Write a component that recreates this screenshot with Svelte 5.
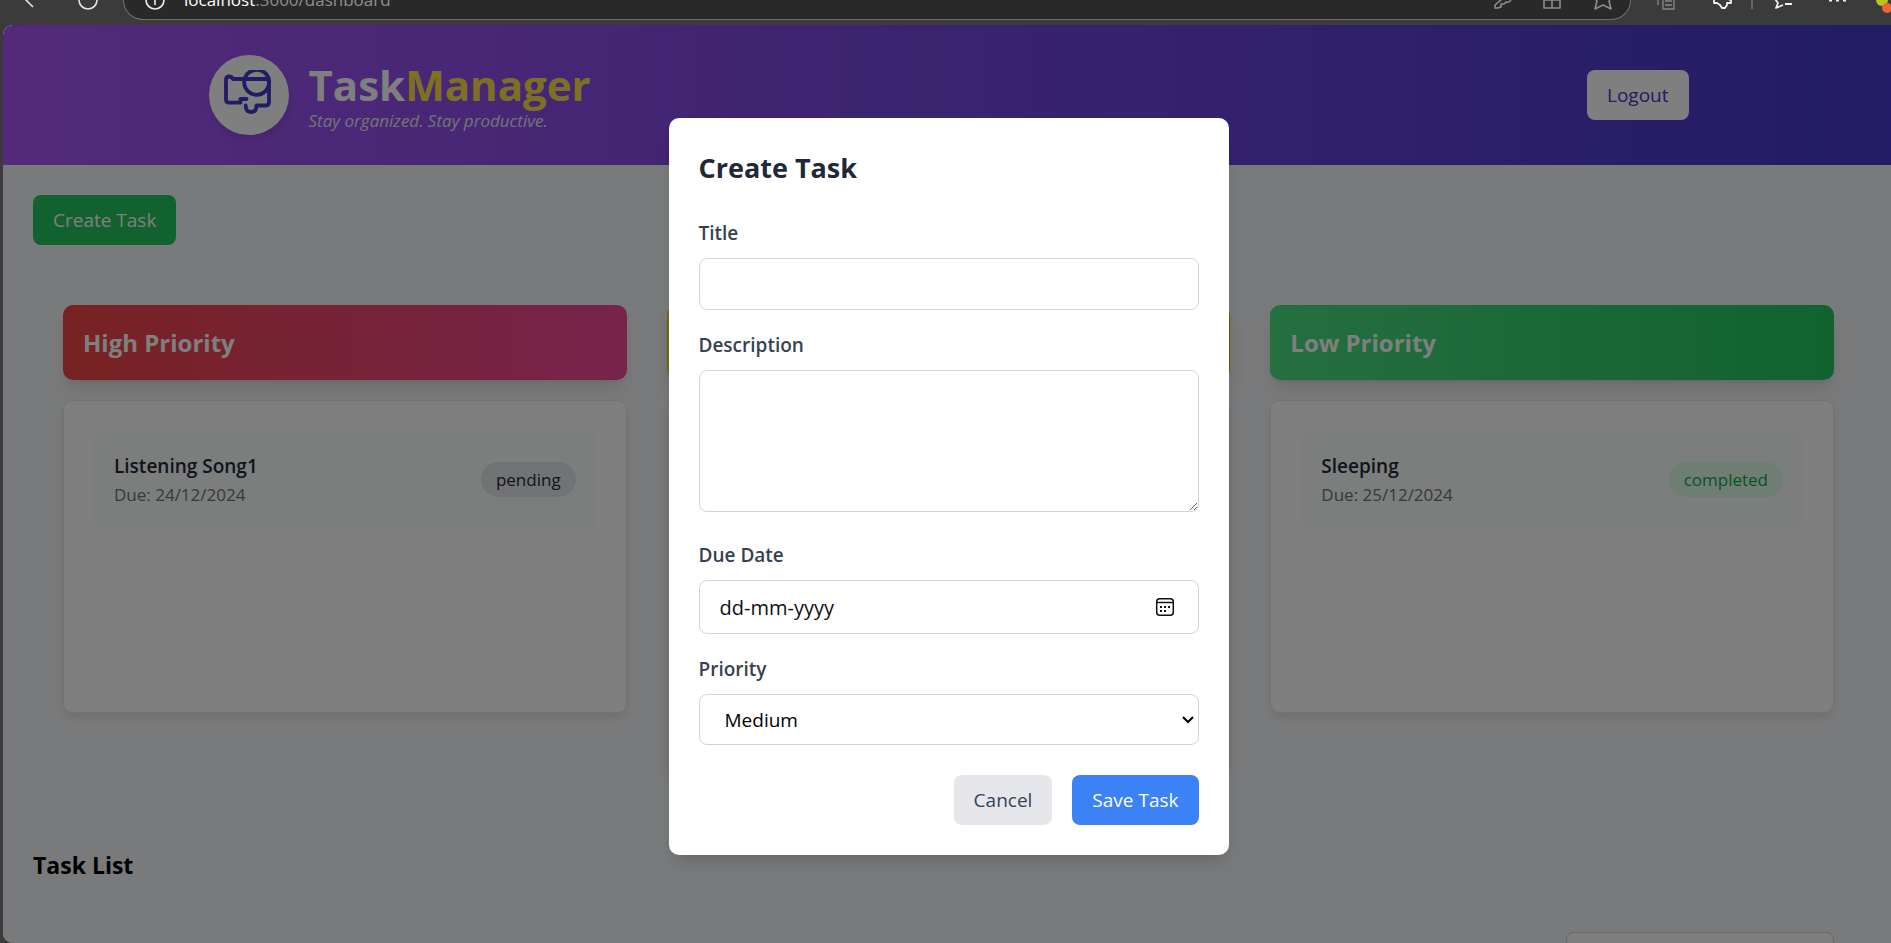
<script>
  let title = $state('');
  let description = $state('');
  let dueDate = $state('');
  let priority = $state('Medium');
  let search = $state('');

  const columns = [
    {
      name: 'High Priority',
      tone: 'high',
      tasks: [{ title: 'Listening Song1', due: '24/12/2024', status: 'pending' }]
    },
    { name: 'Medium Priority', tone: 'medium', tasks: [] },
    {
      name: 'Low Priority',
      tone: 'low',
      tasks: [{ title: 'Sleeping', due: '25/12/2024', status: 'completed' }]
    }
  ];
</script>

<div class="window">
  <div class="toolbar">
    <div class="nav">
      <svg width="40" height="24" viewBox="0 0 40 24"><path d="M22 -4 L33 7" fill="none" stroke="#e8e8e8" stroke-width="1.6" /></svg>
      <svg width="40" height="24" viewBox="0 0 40 24"><circle cx="28" cy="0" r="9" fill="none" stroke="#e8e8e8" stroke-width="1.6" /></svg>
    </div>
    <div class="address">
      <svg width="24" height="19" viewBox="0 0 24 19"><circle cx="11" cy="0" r="9" fill="none" stroke="#f0f0f0" stroke-width="1.6" /><path d="M11 -2V5" stroke="#f0f0f0" stroke-width="1.6" /></svg>
      <span class="url"><b>localhost</b>:3000/dashboard</span>
      <svg width="138" height="19" viewBox="0 0 138 19" fill="none" stroke="#8d8d8d" stroke-width="1.6" stroke-linejoin="round">
        <path d="M10 -1L3 5V8H6L9 7V4H12L14 2C17 3 19 1 19 -2" />
        <path d="M52 -8H68V8H52ZM60 -8V8M52 0H68" />
        <path d="M102 -3L105 1L103 9L111 5L119 9L117 1L120 -3" />
      </svg>
    </div>
    <svg class="tools" width="240" height="24" viewBox="0 0 240 24" fill="none" stroke="#f0f0f0" stroke-width="1.8" stroke-linejoin="round">
      <path d="M7 -2V5M12 -3H23V9H12ZM14 1H21M14 5H21" stroke="#747474" />
      <path d="M63 -2V3H66L69 5L71 8H74L76 5V3H80V0C77 0 77 -3 79 -3" />
      <path d="M101 0V9" stroke="#6a6a6a" />
      <path d="M124 -1L127 3L125 8L132 5M134 -1H141M134 4H141" />
      <path d="M178 0H181M185 0H188M192 0H195" stroke-width="3" />
      <circle cx="231" cy="0" r="6" fill="#b8c51d" stroke="none" /><circle cx="236" cy="8" r="5" fill="#f06432" stroke="none" />
    </svg>
  </div>

  <div class="page">
    <header>
      <div class="header-inner">
        <div class="brand">
          <div class="logo">
            <svg width="50" height="50" viewBox="0 0 50 50" fill="none" stroke="#4338ca" stroke-width="3.8" stroke-linecap="round" stroke-linejoin="round">
              <path d="M22.5 29H16.5V32.7H5Q2 32.7 2 29.5V10Q2 6.5 5.5 6.5Q7.5 6.500 9 9H42Q45 9 45 12V32Q45 35.500 42 35.500H32.500Q32.500 42 27 42Q21.700 42 21.700 35.500" />
              <circle cx="32.7" cy="12.3" r="12.5" />
            </svg>
          </div>
          <div class="brand-text">
            <h1>Task<span>Manager</span></h1>
            <p>Stay organized. Stay productive.</p>
          </div>
        </div>
        <button class="btn logout">Logout</button>
      </div>
    </header>

    <main>
      <button class="btn create">Create Task</button>
      <div class="board">
        {#each columns as column}
          <section>
            <h2 class={column.tone}>{column.name}</h2>
            <div class="panel" class:tall={column.tone === 'medium'}>
              {#each column.tasks as task}
                <article>
                  <div>
                    <h3>{task.title}</h3>
                    <p>Due: {task.due}</p>
                  </div>
                  <span class="badge {task.status}">{task.status}</span>
                </article>
              {/each}
            </div>
          </section>
        {/each}
      </div>
      <h2 class="list-title">Task List</h2>
      <div class="filters">
        <input type="text" aria-label="Search tasks" bind:value={search} />
      </div>
    </main>

    <div class="overlay">
      <form class="modal" onsubmit={(event) => event.preventDefault()}>
        <h2>Create Task</h2>
        <div class="field">
          <label for="title">Title</label>
          <input id="title" type="text" bind:value={title} />
        </div>
        <div class="field">
          <label for="description">Description</label>
          <textarea id="description" bind:value={description}></textarea>
        </div>
        <div class="field">
          <label for="due">Due Date</label>
          <div class="date">
            <input id="due" type="text" placeholder="dd-mm-yyyy" bind:value={dueDate} />
            <svg width="20" height="20" viewBox="0 0 20 20" fill="none" stroke="#111" stroke-width="1.5">
              <rect x="1.700" y="1.700" width="16.600" height="16.600" rx="3" /><path d="M2 5.500H18" />
              <path d="M5 10H7M9 10H11M13 10H15M5 14H7M9 14H11" stroke-width="2" />
            </svg>
          </div>
        </div>
        <div class="field">
          <label for="priority">Priority</label>
          <div class="choice">
            <select id="priority" bind:value={priority}>
              <option>Low</option>
              <option>Medium</option>
              <option>High</option>
            </select>
            <svg width="12" height="8" viewBox="0 0 12 8"><path d="M1 1 6 6 11 1" fill="none" stroke="#000" stroke-width="2" /></svg>
          </div>
        </div>
        <div class="actions">
          <button type="button" class="btn cancel">Cancel</button>
          <button type="submit" class="btn save">Save Task</button>
        </div>
      </form>
    </div>
  </div>
</div>

<style>
  :global(body) {
    margin: 0;
    overflow: hidden;
    background: #3b3b3b;
  }
  * {
    box-sizing: border-box;
  }
  h1, h2, h3, p {
    margin: 0;
  }
  .window {
    height: 100vh;
    display: flex;
    flex-direction: column;
    overflow: hidden;
    font: 19px/30px "Open Sans", "Noto Sans", sans-serif;
  }
  button, input, select, textarea {
    font: inherit;
  }

  .toolbar {
    flex: none;
    height: 25px;
    display: flex;
    align-items: flex-start;
    background: #3b3b3b;
    overflow: hidden;
  }
  .toolbar svg {
    flex: none;
    display: block;
  }
  .nav {
    display: flex;
    width: 123px;
    gap: 20px;
  }
  .address {
    flex: 1;
    display: flex;
    height: 20px;
    padding-left: 20px;
    background: #292929;
    border: 1px solid #707070;
    border-top: 0;
    border-radius: 0 0 20px 20px;
  }
  .url {
    flex: 1;
    height: 19px;
    margin-left: 16px;
    color: #909090;
    line-height: 0;
    font-size: 17px;
  }
  .url b {
    color: #fff;
    font-weight: 400;
  }
  .tools {
    margin-left: 20px;
  }

  .page {
    position: relative;
    flex: 1;
    margin: 0 -3px 0 3px;
    overflow: hidden;
    background: #f3f4f6;
    border-radius: 10px 0 0 10px;
  }
  header {
    background: linear-gradient(to right, #a855f7, #4338ca);
  }
  .header-inner {
    max-width: 1600px;
    margin: 0 auto;
    padding: 30px 60px;
    display: flex;
    align-items: center;
    justify-content: space-between;
  }
  .brand {
    display: flex;
    align-items: center;
    gap: 20px;
  }
  .logo {
    display: grid;
    place-items: center;
    width: 80px;
    height: 80px;
    border-radius: 50%;
    background: #fff;
    box-shadow: 0 5px 8px rgb(0 0 0 / 0.1);
  }
  .brand-text {
    padding-top: 5px;
  }
  h1 {
    font-size: 42px;
    line-height: 46px;
    color: #fff;
  }
  h1 span {
    color: #fde047;
  }
  .brand-text p {
    font-size: 17px;
    line-height: 25px;
    font-style: italic;
    color: #e5e7eb;
  }
  .btn {
    padding: 10px 20px;
    border: 0;
    border-radius: 8px;
    color: #fff;
    cursor: pointer;
  }
  .logout {
    background: #fff;
    color: #4338ca;
  }
  .create {
    display: block;
    background: #22c55e;
  }

  main {
    padding: 30px;
  }
  .board {
    display: grid;
    grid-template-columns: repeat(3, 1fr);
    gap: 40px;
    align-items: start;
    padding: 60px 30px;
  }
  .board h2 {
    margin-bottom: 20px;
    padding: 20px;
    border-radius: 10px;
    color: #fff;
    font-size: 24px;
    line-height: 35px;
    box-shadow: 0 12px 19px -4px rgb(0 0 0 / 0.1), 0 5px 8px -5px rgb(0 0 0 / 0.1);
  }
  .high {
    background: linear-gradient(to right, #ef4444, #ec4899);
  }
  .medium {
    background: linear-gradient(to right, #facc15, #eab308);
  }
  .low {
    background: linear-gradient(to right, #4ade80, #22c55e);
  }
  .panel {
    min-height: 313px;
    padding: 30px;
    border: 1px solid #e5e7eb;
    border-radius: 10px;
    background: #fff;
    box-shadow: 0 5px 8px -1px rgb(0 0 0 / 0.1);
  }
  .tall {
    min-height: 374px;
  }
  article {
    display: flex;
    justify-content: space-between;
    align-items: center;
    padding: 20px;
    border-radius: 10px;
    background: #f9fafb;
    box-shadow: 0 1px 2px rgb(0 0 0 / 0.05);
  }
  h3 {
    font-size: 19px;
    line-height: 31px;
    font-weight: 600;
    color: #1f2937;
  }
  article p {
    font-size: 17px;
    line-height: 25px;
    color: #6b7280;
  }
  .badge {
    padding: 5px 15px;
    border-radius: 18px;
    font-size: 17px;
    line-height: 25px;
  }
  .pending {
    background: #e5e7eb;
    color: #1f2937;
  }
  .completed {
    background: #dcfce7;
    color: #16a34a;
  }
  .list-title {
    font-size: 23px;
    line-height: 35px;
    margin: 14px 0 49px;
  }
  .filters {
    display: flex;
    justify-content: flex-end;
    padding-right: 30px;
  }
  .filters input {
    width: 268px;
    height: 52px;
    border: 1px solid #d1d5db;
    border-radius: 8px;
    background: #fff;
  }

  .overlay {
    position: absolute;
    inset: 0;
    display: grid;
    place-items: center;
    padding-top: 5px;
    background: rgb(0 0 0 / 0.5);
  }
  .modal {
    width: 560px;
    padding: 30px;
    border-radius: 10px;
    background: #fff;
    box-shadow: 0 12px 19px -4px rgb(0 0 0 / 0.1), 0 5px 8px -5px rgb(0 0 0 / 0.1);
  }
  .modal h2 {
    margin-bottom: 30px;
    font-size: 27px;
    line-height: 40px;
    color: #1f2937;
  }
  .field {
    margin-bottom: 20px;
  }
  .field label {
    display: block;
    margin-bottom: 10px;
    font-weight: 600;
    color: #374151;
  }
  .field input, .field textarea, .field select {
    display: block;
    width: 100%;
    height: 52px;
    padding: 10px 20px;
    border: 1px solid #d1d5db;
    border-radius: 8px;
    background: #fff;
    color: #000;
  }
  .field textarea {
    height: 142px;
    margin-bottom: 28px;
    resize: vertical;
  }
  .date, .choice {
    display: grid;
    align-items: center;
  }
  .date > *, .choice > * {
    grid-area: 1 / 1;
  }
  .date svg, .choice svg {
    justify-self: end;
    pointer-events: none;
  }
  .date svg {
    margin-right: 24px;
  }
  .choice svg {
    margin-right: 5px;
  }
  .field .date input {
    height: 54px;
    font-size: 20px;
  }
  .date input::placeholder {
    color: #111;
    opacity: 1;
  }
  .field select {
    appearance: none;
    height: 51px;
    padding-left: 25px;
  }
  .actions {
    display: flex;
    justify-content: flex-end;
    gap: 20px;
    margin-top: 30px;
  }
  .cancel {
    background: #e5e7eb;
    color: #374151;
  }
  .save {
    background: #3b82f6;
  }
</style>
